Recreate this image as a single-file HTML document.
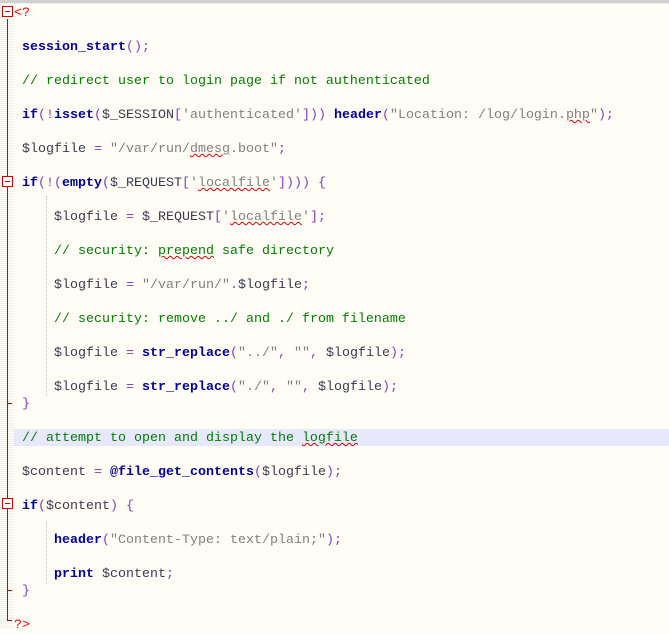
<!DOCTYPE html>
<html><head><style>
body{margin:0;width:669px;height:629px;overflow:hidden;background:#fffdf6;position:relative;font-family:"Liberation Mono",monospace;font-size:13.33px}
.top{position:absolute;left:0;top:0;width:669px;height:3px;background:#d0d0d0;border-bottom:1px solid #f0f0f0}
.gut{position:absolute;left:0;top:4px;width:14px;height:625px;background:repeating-linear-gradient(0deg,#fffdf6 0 1px,#f4f2ec 1px 2px)}
.vl{position:absolute;left:7px;top:19px;width:1px;height:601px;background:#d00000}
.box{position:absolute;left:2px;width:9px;height:9px;border:1px solid #d00000;background:#fff}
.box:after{content:"";position:absolute;left:2px;top:4px;width:5px;height:1px;background:#d00000}
.tk{position:absolute;left:7px;width:5px;height:1px;background:#d00000}
.hl{position:absolute;left:14px;top:429px;width:655px;height:17px;background:#e8e8fc}
.l{position:absolute;left:22px;height:17px;line-height:17px;white-space:pre;color:#3a3a50}
.i{left:54px}
.g{position:absolute;left:46px;width:0;border-left:1px dotted #c0c0c0}
.k{color:#0000a0;font-weight:bold}
.s{color:#808080}
.p{color:#8040c0}
.c{color:#008000}
.r{color:#ff0000}
.w{text-decoration:underline wavy #e00000;text-decoration-thickness:1px}
</style></head><body>
<div class="top"></div>
<div class="gut"></div>
<div class="hl"></div>
<div class="vl"></div>
<div class="box" style="top:6px"></div>
<div class="box" style="top:176px"></div>
<div class="box" style="top:498px"></div>
<div class="tk" style="top:403px"></div>
<div class="tk" style="top:590px"></div>
<div class="tk" style="top:620px"></div>
<div class="g" style="top:196px;height:200px"></div>
<div class="g" style="top:522px;height:62px"></div>
<div class="l r" style="top:5px;left:14px">&lt;?</div>
<div class="l" style="top:39px"><span class="k">session_start</span><span class="p">();</span></div>
<div class="l c" style="top:73px">// redirect user to login page if not authenticated</div>
<div class="l" style="top:107px"><span class="k">if</span><span class="p">(!</span><span class="k">isset</span><span class="p">(</span>$_SESSION<span class="p">[</span><span class="s">'authenticated'</span><span class="p">])) </span><span class="k">header</span><span class="p">(</span><span class="s">"Location: /log/login.<span class="w">php</span>"</span><span class="p">);</span></div>
<div class="l" style="top:141px">$logfile <span class="p">=</span> <span class="s">"/var/run/<span class="w">dmesg</span>.boot"</span><span class="p">;</span></div>
<div class="l" style="top:175px"><span class="k">if</span><span class="p">(!(</span><span class="k">empty</span><span class="p">(</span>$_REQUEST<span class="p">[</span><span class="s">'<span class="w">localfile</span>'</span><span class="p">]))) {</span></div>
<div class="l i" style="top:209px">$logfile <span class="p">=</span> $_REQUEST<span class="p">[</span><span class="s">'<span class="w">localfile</span>'</span><span class="p">];</span></div>
<div class="l i c" style="top:243px">// security: <span class="w">prepend</span> safe directory</div>
<div class="l i" style="top:277px">$logfile <span class="p">=</span> <span class="s">"/var/run/"</span><span class="p">.</span>$logfile<span class="p">;</span></div>
<div class="l i c" style="top:311px">// security: remove ../ and ./ from filename</div>
<div class="l i" style="top:345px">$logfile <span class="p">=</span> <span class="k">str_replace</span><span class="p">(</span><span class="s">"../"</span><span class="p">,</span> <span class="s">""</span><span class="p">,</span> $logfile<span class="p">);</span></div>
<div class="l i" style="top:379px">$logfile <span class="p">=</span> <span class="k">str_replace</span><span class="p">(</span><span class="s">"./"</span><span class="p">,</span> <span class="s">""</span><span class="p">,</span> $logfile<span class="p">);</span></div>
<div class="l p" style="top:396px">}</div>
<div class="l c" style="top:430px">// attempt to open and display the <span class="w">logfile</span></div>
<div class="l" style="top:464px">$content <span class="p">=</span> <span class="k">@file_get_contents</span><span class="p">(</span>$logfile<span class="p">);</span></div>
<div class="l" style="top:498px"><span class="k">if</span><span class="p">(</span>$content<span class="p">) {</span></div>
<div class="l i" style="top:532px"><span class="k">header</span><span class="p">(</span><span class="s">"Content-Type: text/plain;"</span><span class="p">);</span></div>
<div class="l i" style="top:566px"><span class="k">print</span> $content<span class="p">;</span></div>
<div class="l p" style="top:583px">}</div>
<div class="l r" style="top:617px;left:14px">?&gt;</div>
</body></html>
